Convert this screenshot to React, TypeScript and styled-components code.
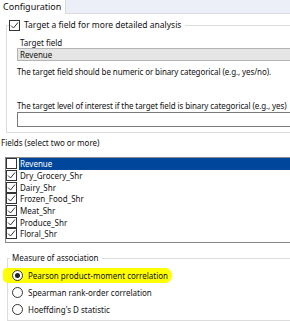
import React from "react";
import styled, { createGlobalStyle } from "styled-components";

const Global = createGlobalStyle`
  html, body { margin: 0; padding: 0; background: #fff; }
  body { font-family: "Noto Sans", "Open Sans", sans-serif; font-size: 8px; color: #111; }
`;

const Page = styled.div`
  width: 290px;
  height: 321px;
  overflow: hidden;
  background: #fff;
`;

const TabStrip = styled.div`
  display: flex;
  height: 13px;
  background: #eceff8;
  border-bottom: 1px solid #dadbdc;
`;

const Tab = styled.div`
  background: #fff;
  padding: 0 4px 0 3px;
  font-size: 9px;
  line-height: 13px;
  height: 14px;
  border-right: 1px solid #dadbdc;
`;

const Body = styled.div`
  width: 330px;
  padding: 5px 0 0 6px;
  display: flex;
  flex-direction: column;
`;

const Group = styled.fieldset<{ $padL: number; $padB: number }>`
  margin: 0;
  border: 1px solid #dcdcdc;
  border-right: none;
  padding: 0 0 ${(p) => p.$padB}px ${(p) => p.$padL}px;
  min-width: 0;
`;

const CheckLegend = styled.legend`
  padding: 0 4px 0 0;
  margin-left: -8px;
  display: flex;
  align-items: center;
  gap: 4px;
  font-size: 8.5px;
  line-height: 12px;
  height: 12px;
`;

const PlainLegend = styled.legend`
  padding: 0 3px 0 2px;
  margin-left: -2px;
  line-height: 12px;
`;

const Box = styled.span`
  width: 11px;
  height: 11px;
  box-sizing: border-box;
  border: 1px solid #333;
  background: #fff;
  display: inline-flex;
  align-items: center;
  justify-content: center;
  flex: none;
`;

const FieldLabel = styled.div`
  margin-top: 6px;
  padding-left: 3px;
  line-height: 11px;
  white-space: nowrap;
`;

const Note = styled.div<{ $mt: number }>`
  margin-top: ${(p) => p.$mt}px;
  line-height: 12px;
  letter-spacing: -0.1px;
  white-space: nowrap;
`;

const Select = styled.div`
  height: 13px;
  box-sizing: border-box;
  line-height: 11px;
  background: #e5e5e5;
  border: 1px solid #b4b4b4;
  padding-left: 2px;
`;

const TextInput = styled.div`
  height: 15px;
  box-sizing: border-box;
  border: 1px solid #7a7a7a;
  background: #fff;
`;

const FieldsCaption = styled.div`
  margin-top: 4px;
  margin-left: -5px;
  line-height: 12px;
  white-space: nowrap;
`;

const List = styled.div`
  margin-top: 8px;
  margin-left: -1px;
  border: 1px solid #828790;
  border-right: none;
  height: 84px;
  display: flex;
  flex-direction: column;
`;

const Row = styled.div`
  display: flex;
  align-items: center;
  height: 11.7px;
  white-space: nowrap;
`;

const RowText = styled.span<{ $sel?: boolean }>`
  flex: 1;
  height: 100%;
  display: flex;
  align-items: center;
  margin-left: 2px;
  padding-left: 1px;
  background: ${(p) => (p.$sel ? "#00479c" : "transparent")};
  color: ${(p) => (p.$sel ? "#fff" : "#111")};
`;

const RadioGroup = styled(Group)`
  margin-top: 9px;
  margin-left: 1px;
`;

const Options = styled.div`
  margin-top: 2.5px;
  display: flex;
  flex-direction: column;
`;

const RadioRow = styled.div`
  display: flex;
  align-items: center;
  gap: 5px;
  height: 17px;
  position: relative;
  white-space: nowrap;
`;

const Highlight = styled.span`
  position: absolute;
  left: -9px;
  top: 1.5px;
  width: 169px;
  height: 15px;
  background: #ffff00;
  border-radius: 4px 7px 7px 5px;
`;

const Radio = styled.span<{ $on?: boolean }>`
  width: 11px;
  height: 11px;
  box-sizing: border-box;
  border-radius: 50%;
  border: 1px solid #333;
  background: #fff;
  position: relative;
  flex: none;
  display: inline-flex;
  align-items: center;
  justify-content: center;
  &::after {
    content: "";
    display: ${(p) => (p.$on ? "block" : "none")};
    width: 5px;
    height: 5px;
    border-radius: 50%;
    background: #222;
  }
`;

const RadioText = styled.span`
  position: relative;
`;

const Check = () => (
  <svg width="9" height="9" viewBox="0 0 9 9">
    <path d="M1 4.5 L3.5 7 L8 1.5" fill="none" stroke="#333" strokeWidth="1" />
  </svg>
);

const fields = [
  "Revenue",
  "Dry_Grocery_Shr",
  "Dairy_Shr",
  "Frozen_Food_Shr",
  "Meat_Shr",
  "Produce_Shr",
  "Floral_Shr",
];

const options = [
  "Pearson product-moment correlation",
  "Spearman rank-order correlation",
  "Hoeffding's D statistic",
];

export default function App() {
  return (
    <Page>
      <Global />
      <TabStrip>
        <Tab>Configuration</Tab>
      </TabStrip>
      <Body>
        <Group $padL={10} $padB={5}>
          <CheckLegend>
            <Box>
              <Check />
            </Box>
            Target a field for more detailed analysis
          </CheckLegend>
          <FieldLabel>Target field</FieldLabel>
          <Select>Revenue</Select>
          <Note $mt={5}>
            The target field should be numeric or binary categorical (e.g., yes/no).
          </Note>
          <Note $mt={22}>
            The target level of interest if the target field is binary categorical (e.g., yes)
          </Note>
          <TextInput />
        </Group>
        <FieldsCaption>Fields (select two or more)</FieldsCaption>
        <List>
          {fields.map((f, i) => (
            <Row key={f}>
              <Box>{i === 0 ? null : <Check />}</Box>
              <RowText $sel={i === 0}>{f}</RowText>
            </Row>
          ))}
        </List>
        <RadioGroup $padL={4} $padB={2}>
          <PlainLegend>Measure of association</PlainLegend>
          <Options>
            {options.map((o, i) => (
              <RadioRow key={o}>
                {i === 0 && <Highlight />}
                <Radio $on={i === 0} />
                <RadioText>{o}</RadioText>
              </RadioRow>
            ))}
          </Options>
        </RadioGroup>
      </Body>
    </Page>
  );
}
